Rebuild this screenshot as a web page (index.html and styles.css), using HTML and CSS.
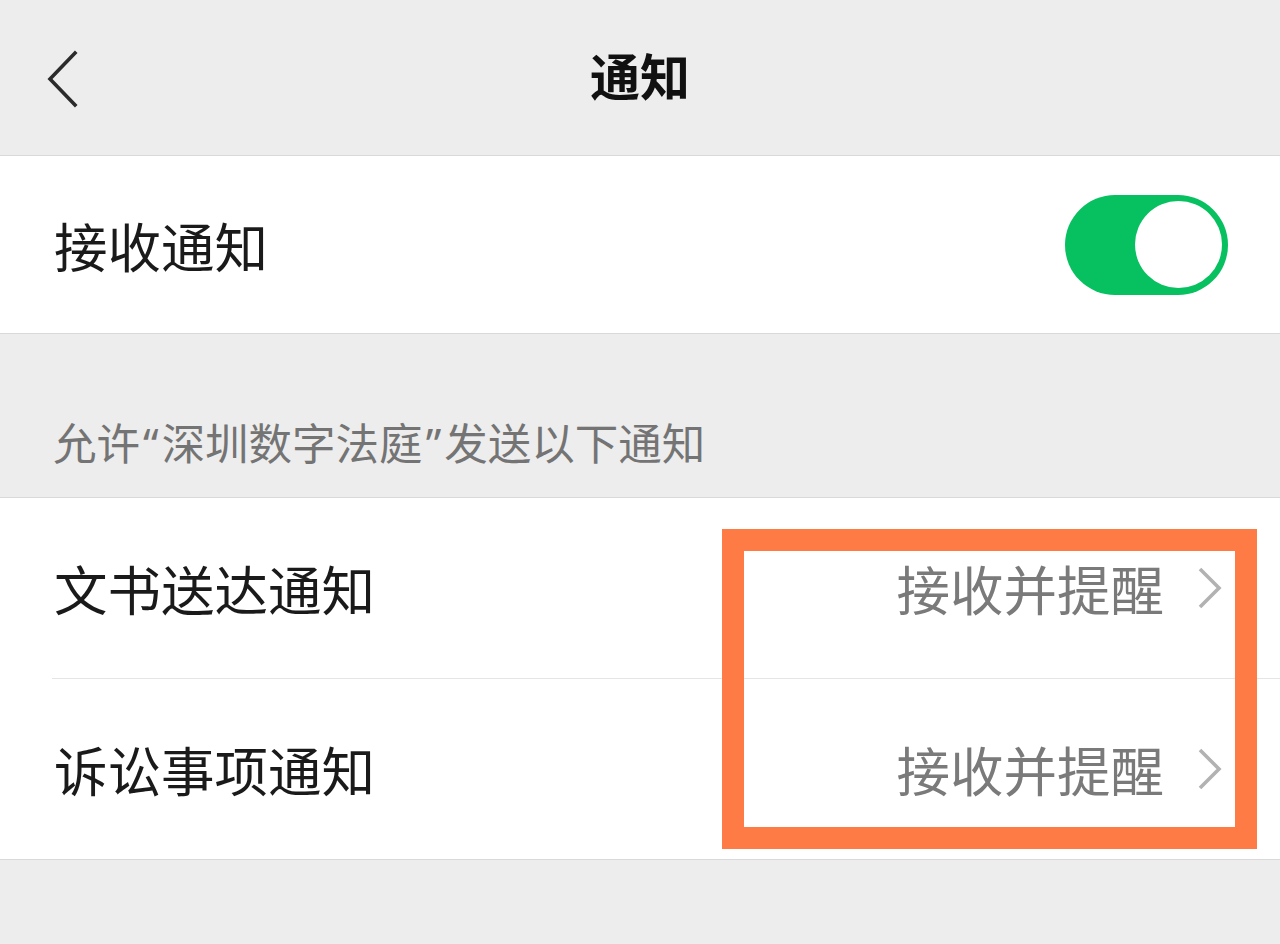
FILE: index.html
```html
<!DOCTYPE html>
<html lang="zh-CN">
<head>
<meta charset="utf-8">
<title>通知</title>
<link rel="stylesheet" href="styles.css">
</head>
<body>
<header class="navbar">
  <div class="nav-left">
    <svg class="back-icon" width="34" height="58" viewBox="0 0 34 58">
      <polyline points="29,3 4,29 29,55" fill="none" stroke="#2b2b2b" stroke-width="3.6" stroke-linecap="square" stroke-linejoin="miter"/>
    </svg>
  </div>
  <h1 class="nav-title">通知</h1>
  <div class="nav-right"></div>
</header>

<section class="cell-group">
  <div class="cell cell-switch">
    <span class="cell-label">接收通知</span>
    <span class="switch"><span class="switch-knob"></span></span>
  </div>
</section>

<div class="group-tip">允许<span class="quote">“</span>深圳数字法庭<span class="quote">”</span>发送以下通知</div>

<section class="cell-group list-group">
  <div class="cell cell-link">
    <div class="cell-inner">
      <span class="cell-label">文书送达通知</span>
      <span class="cell-value">接收并提醒</span>
      <svg class="arrow" width="26" height="44" viewBox="0 0 26 44"><polyline points="3,3 22,22 3,41" fill="none" stroke="#b2b2b2" stroke-width="3.6"/></svg>
    </div>
  </div>
  <div class="cell cell-link last">
    <div class="cell-inner">
      <span class="cell-label">诉讼事项通知</span>
      <span class="cell-value">接收并提醒</span>
      <svg class="arrow" width="26" height="44" viewBox="0 0 26 44"><polyline points="3,3 22,22 3,41" fill="none" stroke="#b2b2b2" stroke-width="3.6"/></svg>
    </div>
  </div>
  <div class="highlight"></div>
</section>
</body>
</html>
```

FILE: styles.css
```css
* { box-sizing: border-box; }

html, body {
  margin: 0;
  padding: 0;
}

body {
  background: #ededed;
  font-family: "Noto Sans CJK SC", "Noto Sans", sans-serif;
  color: #1a1a1a;
  width: 1280px;
  min-height: 944px;
}

.navbar {
  height: 156px;
  display: grid;
  grid-template-columns: 1fr auto 1fr;
  align-items: center;
  border-bottom: 1px solid #d9d9d9;
  background: #ededed;
}

.nav-left {
  padding-left: 46px;
  display: flex;
  align-items: center;
  padding-top: 2px;
}

.back-icon { display: block; }

.nav-title {
  margin: 0 0 8px 0;
  font-size: 50px;
  font-weight: 700;
  line-height: 1;
  color: #111;
}

.cell-group {
  background: #fff;
  border-bottom: 1px solid #d9d9d9;
}

.cell-switch {
  height: 177px;
  display: flex;
  align-items: center;
  justify-content: space-between;
  padding: 0 52px 0 54px;
}

.cell-label {
  font-size: 53.5px;
  line-height: 1;
  color: #1a1a1a;
}

.switch {
  width: 163px;
  height: 100px;
  border-radius: 50px;
  background: #07c160;
  display: flex;
  align-items: center;
  justify-content: flex-end;
  padding-right: 6px;
}

.switch-knob {
  width: 87px;
  height: 87px;
  border-radius: 50%;
  background: #fff;
}

.group-tip {
  height: 164px;
  padding: 87px 0 0 53px;
  font-size: 43.5px;
  line-height: 42px;
  color: #747474;
  border-bottom: 1px solid #d9d9d9;
}

.quote {
  font-family: "Noto Sans", "Liberation Sans", sans-serif;
  padding: 0 3px;
}

.list-group {
  position: relative;
}

.cell-link {
  padding-left: 52px;
}

.cell-inner {
  height: 181px;
  display: flex;
  align-items: center;
  border-bottom: 1px solid #e5e5e5;
  padding-left: 2px;
  padding-right: 57px;
}

.cell-link.last .cell-inner {
  height: 180px;
  border-bottom: none;
}

.cell-inner .cell-label {
  flex: 1;
}

.cell-value {
  font-size: 53.5px;
  line-height: 1;
  color: #7a7a7a;
  margin-right: 33px;
}

.arrow { display: block; }

.highlight {
  position: absolute;
  left: 722px;
  top: 31px;
  width: 535px;
  height: 320px;
  border: 22px solid #fe7b46;
  pointer-events: none;
}
```
